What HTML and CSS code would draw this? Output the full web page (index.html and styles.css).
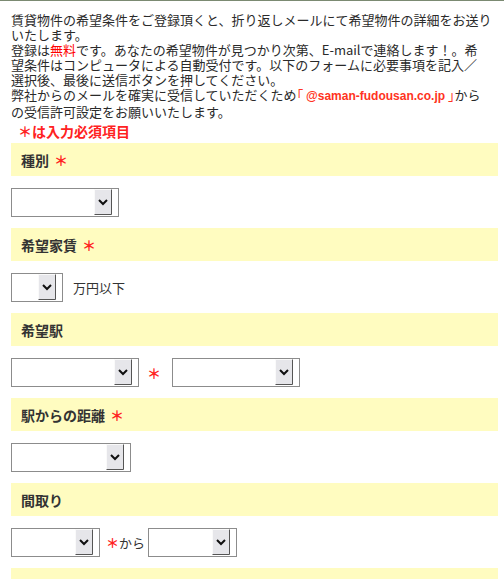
FILE: index.html
```html
<!DOCTYPE html>
<html lang="ja">
<head>
    <meta charset="UTF-8">
    <meta name="viewport" content="width=device-width, initial-scale=1.0">
    <title>賃貸物件 希望条件登録</title>
    <link rel="stylesheet" href="styles.css">
</head>
<body>
    <div class="wrap">
        <p class="intro">
            賃貸物件の希望条件をご登録頂くと、折り返しメールにて希望物件の詳細をお送りいたします。<br>
            登録は<span class="free">無料</span>です。あなたの希望物件が見つかり次第、E-mailで連絡します！。希<br>望条件はコンピュータによる自動受付です。以下のフォームに必要事項を記入／<br>選択後、最後に送信ボタンを押してください。<br>
            弊社からのメールを確実に受信していただくため<span class="domain">「 <span class="mail">@saman-fudousan.co.jp</span> 」</span>からの受信許可設定をお願いいたします。
        </p>
        <p class="note">＊は入力必須項目</p>

        <form id="searchForm">
            <div class="field">
                <h3 class="field-head">種別 <span class="req">＊</span></h3>
                <div class="field-body">
                    <span class="sel sel-kind"><select id="kind"></select><svg class="btn" viewBox="0 0 18 26"><rect x="0.5" y="0.5" width="17" height="25" fill="#e6e6ea" stroke="#fafafa"/><path d="M17.5 0.5V25.5H0.5" fill="none" stroke="#555"/><path d="M5 11l4 4 4-4" fill="none" stroke="#111" stroke-width="2"/></svg></span>
                </div>
            </div>

            <div class="field">
                <h3 class="field-head">希望家賃 <span class="req">＊</span></h3>
                <div class="field-body">
                    <span class="sel sel-rent"><select id="rent"></select><svg class="btn" viewBox="0 0 18 26"><rect x="0.5" y="0.5" width="17" height="25" fill="#e6e6ea" stroke="#fafafa"/><path d="M17.5 0.5V25.5H0.5" fill="none" stroke="#555"/><path d="M5 11l4 4 4-4" fill="none" stroke="#111" stroke-width="2"/></svg></span>
                    <span class="unit">万円以下</span>
                </div>
            </div>

            <div class="field">
                <h3 class="field-head">希望駅</h3>
                <div class="field-body">
                    <span class="sel sel-line"><select id="line"></select><svg class="btn" viewBox="0 0 18 26"><rect x="0.5" y="0.5" width="17" height="25" fill="#e6e6ea" stroke="#fafafa"/><path d="M17.5 0.5V25.5H0.5" fill="none" stroke="#555"/><path d="M5 11l4 4 4-4" fill="none" stroke="#111" stroke-width="2"/></svg></span>
                    <span class="req mark-station">＊</span>
                    <span class="sel sel-line"><select id="station"></select><svg class="btn" viewBox="0 0 18 26"><rect x="0.5" y="0.5" width="17" height="25" fill="#e6e6ea" stroke="#fafafa"/><path d="M17.5 0.5V25.5H0.5" fill="none" stroke="#555"/><path d="M5 11l4 4 4-4" fill="none" stroke="#111" stroke-width="2"/></svg></span>
                </div>
            </div>

            <div class="field">
                <h3 class="field-head">駅からの距離 <span class="req">＊</span></h3>
                <div class="field-body">
                    <span class="sel sel-walk"><select id="walk"></select><svg class="btn" viewBox="0 0 18 26"><rect x="0.5" y="0.5" width="17" height="25" fill="#e6e6ea" stroke="#fafafa"/><path d="M17.5 0.5V25.5H0.5" fill="none" stroke="#555"/><path d="M5 11l4 4 4-4" fill="none" stroke="#111" stroke-width="2"/></svg></span>
                </div>
            </div>

            <div class="field">
                <h3 class="field-head">間取り</h3>
                <div class="field-body">
                    <span class="sel sel-room"><select id="roomFrom"></select><svg class="btn" viewBox="0 0 18 26"><rect x="0.5" y="0.5" width="17" height="25" fill="#e6e6ea" stroke="#fafafa"/><path d="M17.5 0.5V25.5H0.5" fill="none" stroke="#555"/><path d="M5 11l4 4 4-4" fill="none" stroke="#111" stroke-width="2"/></svg></span>
                    <span class="range"><span class="req">＊</span>から</span>
                    <span class="sel sel-room"><select id="roomTo"></select><svg class="btn" viewBox="0 0 18 26"><rect x="0.5" y="0.5" width="17" height="25" fill="#e6e6ea" stroke="#fafafa"/><path d="M17.5 0.5V25.5H0.5" fill="none" stroke="#555"/><path d="M5 11l4 4 4-4" fill="none" stroke="#111" stroke-width="2"/></svg></span>
                </div>
            </div>

            <div class="field">
                <h3 class="field-head">条件</h3>
            </div>
        </form>
    </div>
</body>
</html>
```

FILE: styles.css
```css
body {
    font-family: "Noto Sans CJK JP", "Liberation Sans", sans-serif;
    margin: 0;
    padding: 0;
    background-color: #fff;
    color: #333;
    border-top: 1px solid #7b8a72;
}
.wrap {
    padding: 11px 6px 0 11px;
}
.intro {
    width: 481px;
    margin: 0;
    font-size: 13px;
    line-height: 15px;
    color: #2a2a2a;
}
.free {
    color: #ff0000;
}
.domain {
    color: #ff3322;
    font-feature-settings: "halt";
}
.domain .mail {
    font-family: "Liberation Sans", sans-serif;
    font-size: 12px;
    font-weight: bold;
}
.note {
    margin: 5px 0 0 7px;
    font-size: 14px;
    line-height: 15px;
    font-weight: bold;
    color: #ff2222;
}
form {
    margin-top: 4px;
}
.field-head {
    display: flex;
    align-items: center;
    height: 33px;
    margin: 0;
    padding-left: 10px;
    background-color: #fffcc0;
    font-size: 14px;
    font-weight: bold;
    color: #333;
}
.field-head .req {
    margin-left: 5px;
}
.req {
    color: #ff2222;
    font-weight: bold;
}
.field-body {
    display: flex;
    align-items: center;
    padding: 12px 0 11px;
    font-size: 13px;
}
.sel {
    position: relative;
    display: inline-block;
    height: 29px;
    box-sizing: border-box;
}
.sel select {
    appearance: none;
    -webkit-appearance: none;
    display: block;
    width: 100%;
    height: 29px;
    margin: 0;
    border: 1px solid #8c8c8c;
    border-radius: 0;
    background: #fff;
    box-sizing: border-box;
}
.sel .btn {
    position: absolute;
    top: 1px;
    right: 7px;
    width: 18px;
    height: 26px;
    pointer-events: none;
}
.sel-kind { width: 108px; }
.sel-rent { width: 52px; }
.sel-line { width: 128px; }
.sel-walk { width: 120px; }
.sel-room { width: 89px; }
.unit {
    margin-left: 10px;
}
.mark-station {
    margin: 0 11px 0 8px;
    font-size: 14px;
}
.range {
    margin: 0 3px 0 6px;
}
```
